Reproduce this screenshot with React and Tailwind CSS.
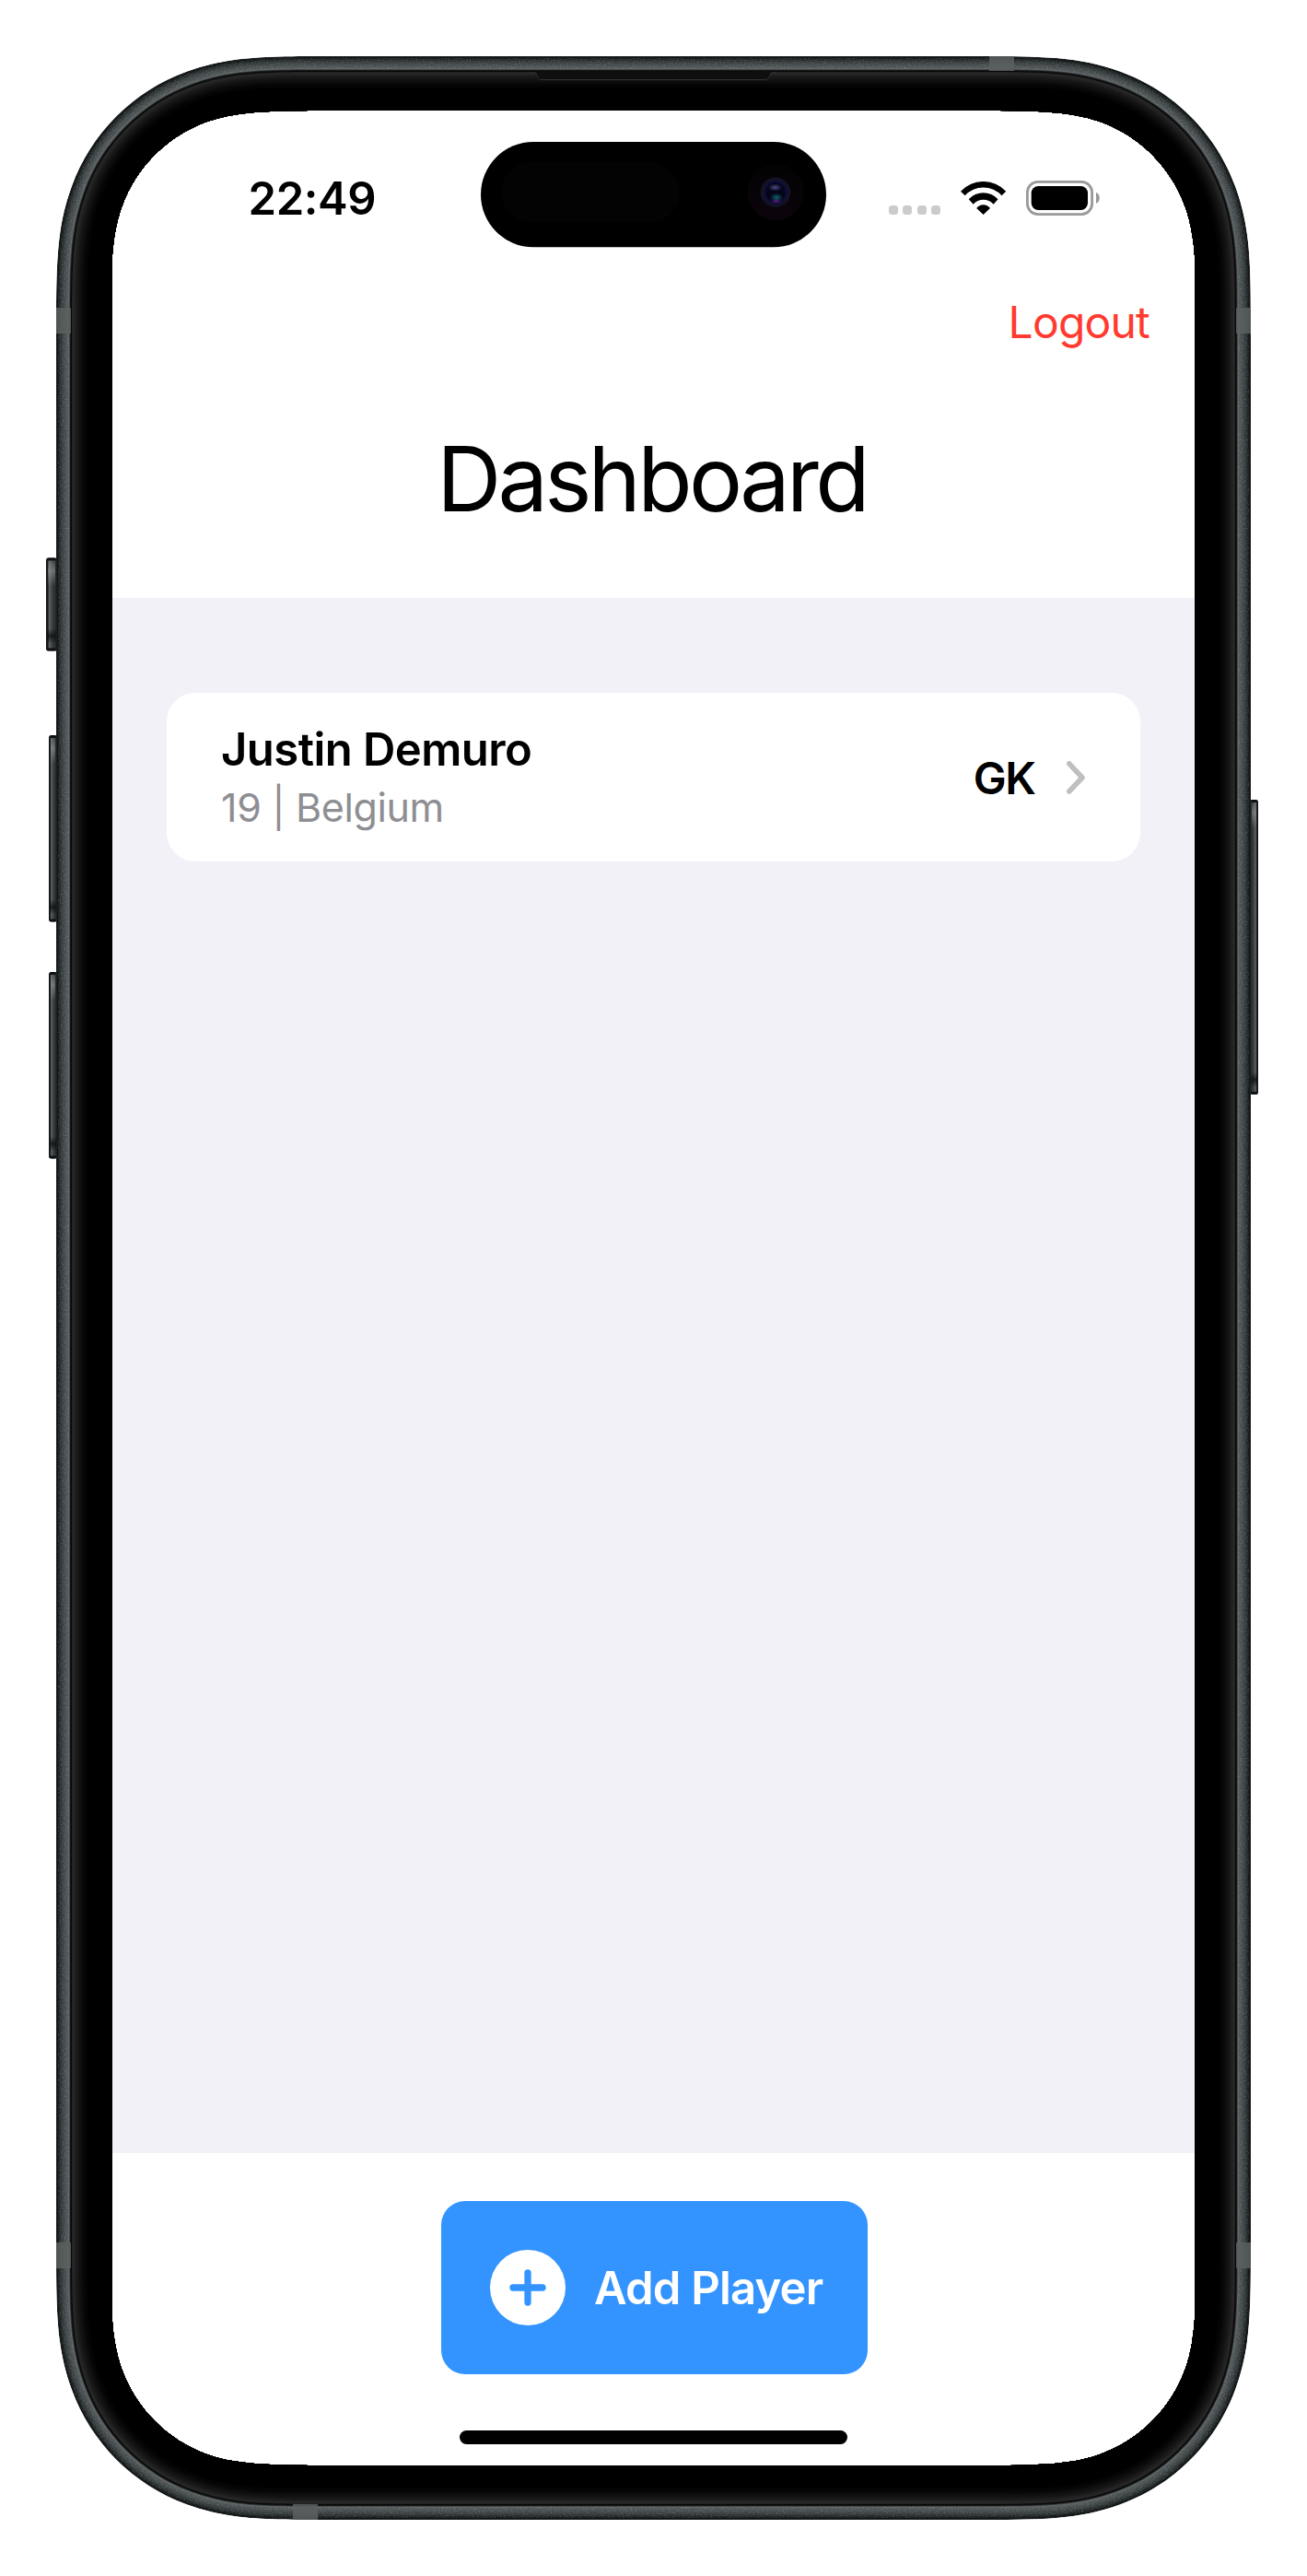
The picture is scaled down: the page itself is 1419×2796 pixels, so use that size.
import React from "react";

/* Corner curve factors: [a, b] set where the curve leaves the straight edge. */
const SCREEN_EASE = [1.528665, 1.08];
const BODY_EASE = [1.36, 1.01];

/* Rectangle with continuous-curvature corners. */
function smoothRect(x, y, w, h, r, ease) {
  const X = x + w;
  const Y = y + h;
  const [a, b, c, d, e, f, g] = [...ease, 0.8373, 0.631494, 0.372824, 0.16906, 0.074911].map((k) => k * r);
  return [
    `M${x + a} ${y}H${X - a}`,
    `C${X - b} ${y} ${X - c} ${y} ${X - d} ${y + g}`,
    `C${X - e} ${y + f} ${X - f} ${y + e} ${X - g} ${y + d}`,
    `C${X} ${y + c} ${X} ${y + b} ${X} ${y + a}`,
    `V${Y - a}`,
    `C${X} ${Y - b} ${X} ${Y - c} ${X - g} ${Y - d}`,
    `C${X - f} ${Y - e} ${X - e} ${Y - f} ${X - d} ${Y - g}`,
    `C${X - c} ${Y} ${X - b} ${Y} ${X - a} ${Y}`,
    `H${x + a}`,
    `C${x + b} ${Y} ${x + c} ${Y} ${x + d} ${Y - g}`,
    `C${x + e} ${Y - f} ${x + f} ${Y - e} ${x + g} ${Y - d}`,
    `C${x} ${Y - c} ${x} ${Y - b} ${x} ${Y - a}`,
    `V${y + a}`,
    `C${x} ${y + b} ${x} ${y + c} ${x + g} ${y + d}`,
    `C${x + f} ${y + e} ${x + e} ${y + f} ${x + d} ${y + g}`,
    `C${x + c} ${y} ${x + b} ${y} ${x + a} ${y}Z`,
  ].join("");
}

const body = (inset) => smoothRect(61 + inset, 61 + inset, 1297 - 2 * inset, 2674 - 2 * inset, 224 - inset, BODY_EASE);

const SCREEN = smoothRect(120, 120, 1179, 2556, 165, SCREEN_EASE);

/* Metal rim and black bezel, as [inset, colour] from the outside in. */
const LAYERS = [
  [0, "#1b1f20"], [1, "#131718"], [2, "#191d1e"], [3, "#212627"], [4, "#292e2f"],
  [5, "#303637"], [6, "#363c3d"], [7, "#3c4243"], [8, "#414748"], [9, "#464c4d"],
  [10, "#4a5051"], [11, "#4e5455"], [12, "#525859"], [13, "#5c6263"], [14.3, "#3a3e3f"],
  [15, "#161818"], [16, "#080808"], [17, "#202020"], [18, "#2a2a2a"], [19, "#232323"],
  [20.5, "#1e1e1e"], [22, "#191919"], [23.5, "#151515"], [25, "#111111"], [27, "#0c0c0c"],
  [29, "#080808"], [31, "#040404"], [34, "#000000"],
];

const SIDE_BUTTONS = [
  [50, 605.4, 12, 101, "left"],
  [53, 798, 9, 202.5, "left"],
  [53, 1055, 9, 202.5, "left"],
  [1357, 868, 9, 320, "right"],
];

const BANDS = [
  [61, 334, 16, 28], [1342, 334, 16, 28], [61, 2434, 16, 28], [1342, 2434, 16, 28],
  [1074, 61, 27, 16], [318, 2718, 27, 17],
];

function PhoneFrame() {
  return (
    <svg className="pointer-events-none absolute inset-0" width="1419" height="2796" viewBox="0 0 1419 2796" aria-hidden="true">
      <defs>
        <clipPath id="ring">
          <path d={body(0) + SCREEN} clipRule="evenodd" />
        </clipPath>
        <clipPath id="rim">
          <path d={body(2) + body(14)} clipRule="evenodd" />
        </clipPath>
        <filter id="grain" x="0" y="0" width="100%" height="100%">
          <feTurbulence type="fractalNoise" baseFrequency="0.6" numOctaves="2" seed="4" />
          <feColorMatrix values="0 0 0 0 0.75  0 0 0 0 0.8  0 0 0 0 0.8  1.6 0 0 0 -0.7" />
        </filter>
        <linearGradient id="left" x1="0" x2="1" y1="0" y2="0">
          <stop offset="0" stopColor="#0c0f10" />
          <stop offset="0.16" stopColor="#1a1e1f" />
          <stop offset="0.3" stopColor="#5d6364" />
          <stop offset="0.55" stopColor="#3a3f40" />
          <stop offset="1" stopColor="#1c2021" />
        </linearGradient>
        <linearGradient id="right" x1="1" x2="0" y1="0" y2="0">
          <stop offset="0" stopColor="#0c0f10" />
          <stop offset="0.16" stopColor="#1a1e1f" />
          <stop offset="0.3" stopColor="#5d6364" />
          <stop offset="0.55" stopColor="#3a3f40" />
          <stop offset="1" stopColor="#1c2021" />
        </linearGradient>
        <linearGradient id="shine" x1="0" x2="0" y1="0" y2="1">
          <stop offset="0" stopColor="#a3a9aa" stopOpacity="0.15" />
          <stop offset="0.4" stopColor="#a3a9aa" stopOpacity="0.5" />
          <stop offset="1" stopColor="#a3a9aa" stopOpacity="0" />
        </linearGradient>
        <linearGradient id="shade" x1="0" x2="0" y1="0" y2="1">
          <stop offset="0" stopColor="#0b0d0e" stopOpacity="0" />
          <stop offset="0.5" stopColor="#0b0d0e" stopOpacity="0.75" />
          <stop offset="1" stopColor="#0b0d0e" stopOpacity="0" />
        </linearGradient>
        <radialGradient id="lens" cx="0.5" cy="0.5" r="0.5">
          <stop offset="0" stopColor="#05051c" />
          <stop offset="0.6" stopColor="#0a0a38" />
          <stop offset="0.75" stopColor="#11112c" />
          <stop offset="1" stopColor="#13131f" />
        </radialGradient>
        <radialGradient id="glint">
          <stop offset="0" stopColor="#4c4c8a" />
          <stop offset="1" stopColor="#4c4c8a" stopOpacity="0" />
        </radialGradient>
        <radialGradient id="teal">
          <stop offset="0" stopColor="#12606a" />
          <stop offset="1" stopColor="#12606a" stopOpacity="0" />
        </radialGradient>
        <radialGradient id="violet">
          <stop offset="0" stopColor="#5a1a80" />
          <stop offset="1" stopColor="#5a1a80" stopOpacity="0" />
        </radialGradient>
        <linearGradient id="well" x1="0" x2="0" y1="0" y2="1">
          <stop offset="0" stopColor="#030303" />
          <stop offset="1" stopColor="#0c040c" />
        </linearGradient>
      </defs>

      {SIDE_BUTTONS.map(([x, y, w, h, side]) => (
        <g key={`${x}-${y}`}>
          <rect x={x} y={y} width={w} height={h} rx="2.5" fill={side === "left" ? "url(#left)" : "url(#right)"} />
          <rect x={x + 1} y={y} width={w - 2} height="3" rx="1.5" fill="#0e1112" />
          <rect x={x + 2} y={y + 3} width={w - 4} height="28" fill="url(#shine)" />
          <rect x={x + 1} y={y + h - 24} width={w - 2} height="16" fill="url(#shade)" />
          <rect x={x + 1} y={y + h - 3} width={w - 2} height="3" rx="1.5" fill="#0e1112" />
        </g>
      ))}

      <g clipPath="url(#ring)">
        {LAYERS.map(([inset, color]) => (
          <path key={inset} d={body(inset)} fill={color} />
        ))}
        <g clipPath="url(#rim)">
          <rect x="61" y="61" width="1297" height="2674" filter="url(#grain)" opacity="0.28" />
        </g>
        {BANDS.map(([x, y, w, h]) => (
          <rect key={`${x}-${y}`} x={x} y={y} width={w} height={h} fill="#5a5f5f" opacity="0.85" />
        ))}
        <path d="M580 77.5h259c-4 0-3 8.500-8 8.500H588c-5 0-4-8.500-8-8.500Z" fill="#0f0f0f" />
        <path d="M576 79h4c3 0 3 7.500 8 7.500h243c5 0 5-7.500 8-7.500h4" fill="none" stroke="#303030" strokeWidth="1" />
      </g>
      <path d="M120 280h2v2236h-2ZM1297 280h2v2236h-2Z" fill="#000" />

      <rect x="522" y="154" width="375" height="114.300" rx="57.150" fill="#000" />
      <rect x="544" y="176" width="194" height="65.500" rx="32.750" fill="#030303" />
      <circle cx="842" cy="208.700" r="30.300" fill="url(#well)" />
      <circle cx="842" cy="208.700" r="16.300" fill="url(#lens)" />
      <circle cx="842" cy="208.700" r="11.500" fill="#050519" stroke="#0d0d42" strokeWidth="1.500" />
      <ellipse cx="841.500" cy="203.500" rx="7.500" ry="4" fill="url(#glint)" />
      <ellipse cx="843" cy="214.500" rx="7" ry="5" fill="url(#teal)" />
      <ellipse cx="842.500" cy="218.500" rx="6" ry="2.500" fill="url(#violet)" />
    </svg>
  );
}

function StatusBar() {
  return (
    <div className="flex h-[190px] shrink-0 items-center pl-[149.500px] text-[49px] leading-none font-semibold">
      <span className="w-[695px] tracking-[-0.4px]">22:49</span>
      <div className="flex items-center">
        <div className="mt-[26px] flex gap-[5.500px]">
          <i className="size-[10px] rounded-[3.500px] bg-[#cbcbcb]" />
          <i className="size-[10px] rounded-[3.500px] bg-[#cbcbcb]" />
          <i className="size-[10px] rounded-[3.500px] bg-[#cbcbcb]" />
          <i className="size-[10px] rounded-[3.500px] bg-[#cbcbcb]" />
        </div>
        <svg className="ml-[21.500px]" width="50" height="36" viewBox="0 0 50 36" aria-label="Wi-Fi">
          <path d="M0 10.700A33.600 33.600 0 0 1 49.200 10.700L44.500 15.300A27 27 0 0 0 4.700 15.300Z" />
          <path d="M8.700 19.300A21.400 21.400 0 0 1 40.500 19.300L35.600 24.700A14.800 14.800 0 0 0 13.700 24.700Z" />
          <path d="M17.200 29A9.200 9.200 0 0 1 32 29L24.600 36Z" />
        </svg>
        <svg className="ml-[21px]" width="81" height="38" viewBox="0 0 81 38" aria-label="Battery">
          <rect x="1.400" y="1.400" width="70.200" height="35.200" rx="11.500" fill="none" stroke="#999" strokeWidth="2.800" />
          <rect x="5.700" y="6" width="61.300" height="26" rx="7.500" />
          <path d="M76 12.700C81 15 81 22.500 76 25Z" fill="#999" />
        </svg>
      </div>
    </div>
  );
}

function PlayerRow({ name, detail, position }) {
  return (
    <button className="flex h-[183px] w-full items-center rounded-[31px] bg-white pr-[60.500px] pl-[59px] text-left">
      <div className="flex grow flex-col pt-[3px]">
        <span className="text-[49px] leading-[63px] font-semibold tracking-[-0.55px]">{name}</span>
        <span className="text-[43px] leading-[63px] tracking-[-0.35px] text-[#8e8e93]">{detail}</span>
      </div>
      <span className="mt-[2px] text-[48px] leading-none font-semibold tracking-[-1.5px]">{position}</span>
      <svg className="ml-[34px]" width="20" height="36" viewBox="0 0 20 36" fill="none" stroke="#bfbfbf" strokeWidth="5.600" strokeLinecap="round" strokeLinejoin="round" aria-hidden="true">
        <path d="M2.800 2.800 17 18 2.800 33" />
      </svg>
    </button>
  );
}

export default function App() {
  return (
    <div className="relative h-[2796px] w-[1419px] bg-white p-[120px] font-['Inter',sans-serif] text-black">
      <main className="flex h-[2556px] w-[1179px] flex-col">
        <StatusBar />
        <div className="flex h-[80px] shrink-0 items-center justify-end pr-[51px]">
          <button className="text-[48px] leading-none tracking-[-0.8px] text-[#ff3b30]">Logout</button>
        </div>
        <h1 className="mr-[4px] h-[259px] shrink-0 text-center text-[97px] leading-[260px] tracking-[-3.740px]">Dashboard</h1>
        <section className="grow bg-[#f2f1f7] pt-[103px] pr-[61px] pl-[61px]">
          <PlayerRow name="Justin Demuro" detail="19 | Belgium" position="GK" />
        </section>
        <footer className="flex h-[339px] shrink-0 flex-col items-center pt-[52px]">
          <button className="ml-px flex h-[187.500px] w-[463px] items-center gap-[31px] rounded-[26px] bg-[#3394ff] pl-[53.500px] text-white">
            <svg width="82" height="82" viewBox="0 0 82 82" aria-hidden="true">
              <circle cx="41" cy="41" r="41" fill="#fff" />
              <path d="M41 25v32M25 41h32" stroke="#3394ff" strokeWidth="7.300" strokeLinecap="round" />
            </svg>
            <span className="mt-[2px] text-[49px] leading-none font-semibold tracking-[-0.82px] whitespace-nowrap">Add Player</span>
          </button>
          <div className="mt-[61.500px] h-[14.700px] w-[421px] rounded-full bg-black" />
        </footer>
      </main>
      <PhoneFrame />
    </div>
  );
}
